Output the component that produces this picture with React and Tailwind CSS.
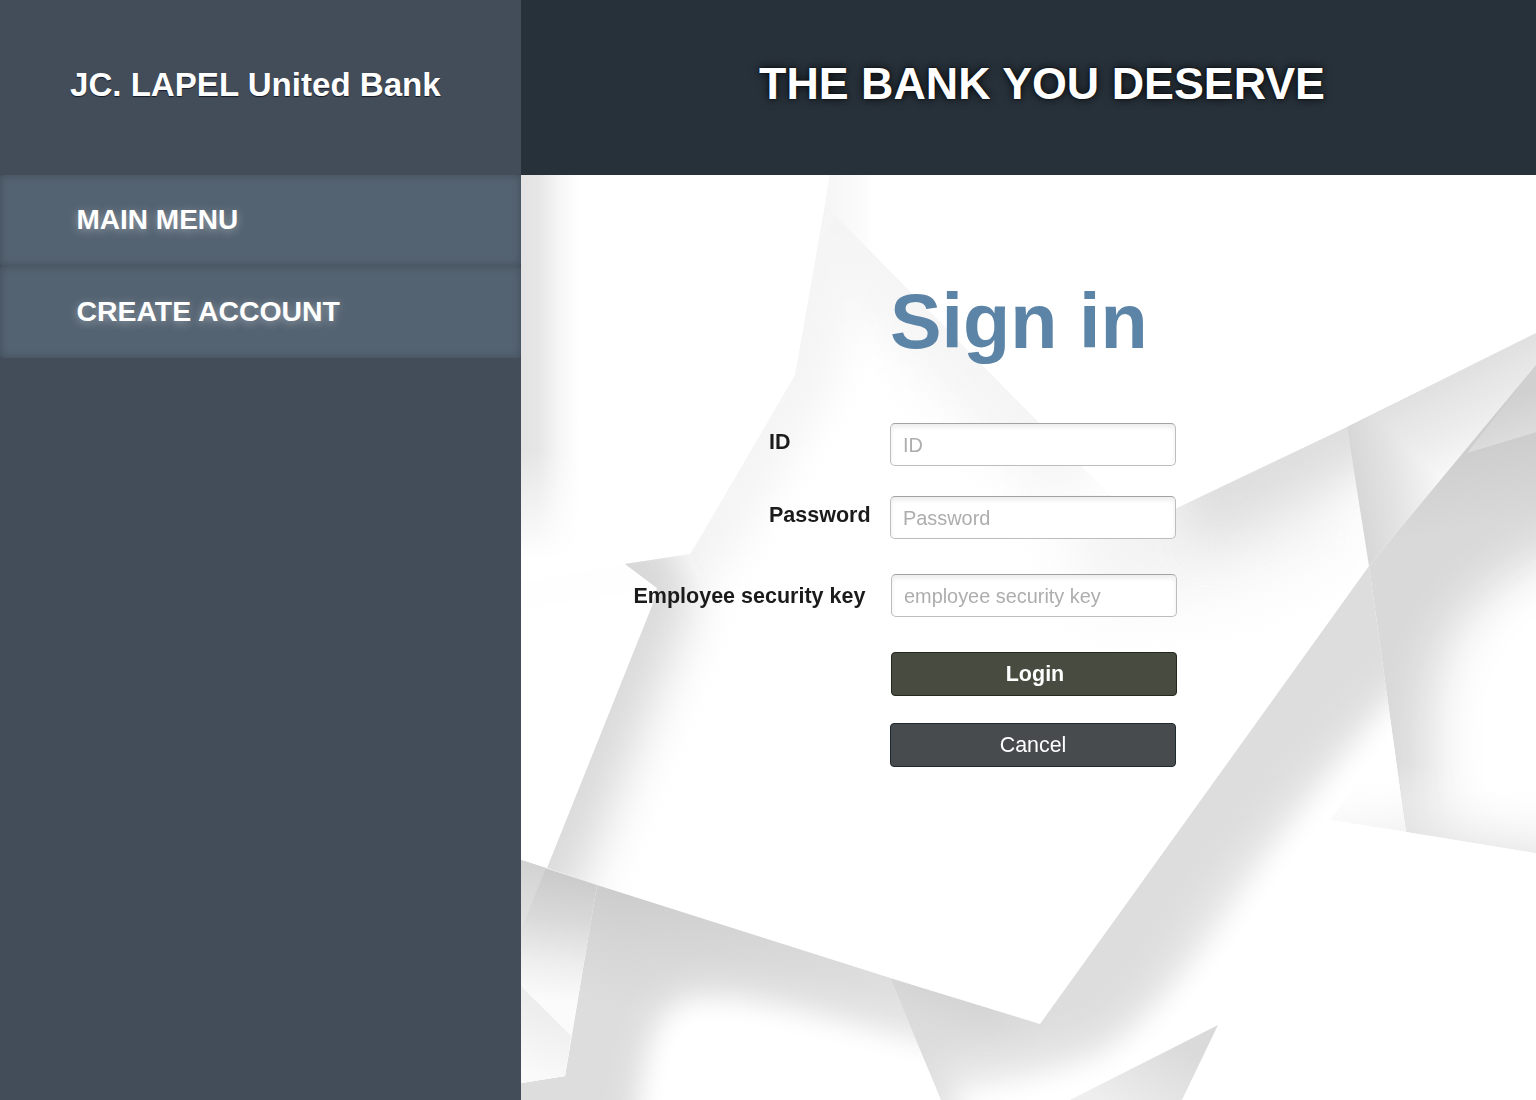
const menu = [
  { label: "MAIN MENU", box: "h-[91px] pb-[1px] text-[28px]" },
  { label: "CREATE ACCOUNT", box: "h-[92px] pb-[2px] text-[28.4px]" },
];

const inputClass =
  "block h-[43px] w-[286px] rounded-[5px] border border-[#bdbdbd] border-t-[#a3a3a3] bg-white px-3 pt-[2px] text-[19.9px] text-[#333] placeholder:text-[#adadad] placeholder:opacity-100 shadow-[inset_0_3px_5px_rgba(0,0,0,0.08)] outline-none";

function Lin({ id, p, stops }) {
  return (
    <linearGradient id={id} gradientUnits="userSpaceOnUse" x1={p[0]} y1={p[1]} x2={p[2]} y2={p[3]}>
      {stops.map(([o, c, a = 1]) => (
        <stop key={o} offset={o} stopColor={c} stopOpacity={a} />
      ))}
    </linearGradient>
  );
}

function Blur({ id, sd }) {
  return (
    <filter id={id} filterUnits="userSpaceOnUse" x="400" y="60" width="1300" height="1200" colorInterpolationFilters="sRGB">
      <feGaussianBlur stdDeviation={sd} />
    </filter>
  );
}

function PaperBackdrop() {
  return (
    <svg className="block h-full w-full [grid-area:1/1]" viewBox="521 175 1015 925" preserveAspectRatio="none" aria-hidden="true">
      <defs>
        <Lin id="strip" p={[521, 0, 580, 0]} stops={[[0, "#e3e3e3"], [0.3, "#e6e6e6"], [0.65, "#f6f6f6"], [1, "#ffffff"]]} />
        <Lin id="stripFade" p={[0, 450, 0, 560]} stops={[[0, "#fff", 0], [1, "#fff", 1]]} />
        <Lin id="ridgeTop" p={[827, 0, 874, 0]} stops={[[0, "#f6f6f6"], [0.7, "#fbfbfb"], [1, "#ffffff"]]} />
        <Lin id="peakTop" p={[1440, 380, 1490, 480]} stops={[[0, "#e0e0e0"], [0.5, "#eeeeee"], [1, "#ffffff"]]} />
        <Lin id="peakLeft" p={[1352, 480, 1450, 466]} stops={[[0, "#d6d6d6"], [0.4, "#e3e3e3"], [1, "#fcfcfc"]]} />
        <Lin id="corner" p={[1500, 400, 1515, 445]} stops={[[0, "#d0d0d0"], [1, "#dedede"]]} />
        <Lin id="right" p={[1450, 450, 1480, 610]} stops={[[0, "#cdcdcd"], [0.5, "#d9d9d9"], [1, "#d9d9d9"]]} />
        <Lin id="rightBottom" p={[1478, 845, 1488, 775]} stops={[[0, "#e6e6e6", 0.7], [0.5, "#f4f4f4", 0.4], [1, "#ffffff", 0]]} />
        <Lin id="facet" p={[1398, 832, 1390, 765]} stops={[[0, "#f4f4f4"], [1, "#ffffff", 0]]} />
        <Lin id="belt" p={[690, 910, 655, 1020]} stops={[[0, "#cccccc"], [0.5, "#d6d6d6"], [1, "#dddddd"]]} />
        <Lin id="beltLight" p={[620, 0, 910, 0]} stops={[[0, "#f2f2f2", 0], [1, "#f2f2f2", 0.5]]} />
        <Lin id="leftPane" p={[560, 875, 545, 1000]} stops={[[0, "#cbcbcb"], [0.35, "#d9d9d9"], [0.7, "#eeeeee"], [1, "#fbfbfb"]]} />
        <Lin id="leftWedge" p={[535, 862, 521, 935]} stops={[[0, "#d2d2d2"], [1, "#e4e4e4"]]} />
        <Lin id="leftLow" p={[545, 1010, 520, 1070]} stops={[[0, "#ededed"], [1, "#fafafa"]]} />
        <Lin id="tail" p={[1180, 1045, 1130, 1120]} stops={[[0, "#dadada"], [1, "#eeeeee"]]} />
        <Blur id="b12" sd="12" />
        <Blur id="b18" sd="18" />
        <Blur id="b24" sd="24" />
        <Blur id="b34" sd="34" />
        <Blur id="soft" sd="0.7" />
        <clipPath id="cRidge"><path d="M831 165 825 205 795 375 690 555 770 700 1000 520 1000 384 825 205Z" /></clipPath>
        <clipPath id="cSlope"><path d="M825 205 1110 495 1150 521 1150 620 760 620 740 470 795 375Z" /></clipPath>
        <clipPath id="cFold"><path d="M690 554 625 564 657 588 652 606 547 868 597 885 900 978 900 400 780 400Z" /></clipPath>
        <clipPath id="cWing"><path d="M1110 495 1150 521 1177 508 1347 427 1369 566 1190 800 850 800 850 495Z" /></clipPath>
        <clipPath id="cRight"><path d="M1540 360 1369 566 1406 832 1540 854Z" /></clipPath>
        <clipPath id="cBand"><path d="M1369 566 1040 1024 890 978 943 1105 1540 1105 1540 854 1406 832Z" /></clipPath>
        <clipPath id="cBelt"><path d="M597 885 890 978 943 1105 515 1105 515 1084 565 1076Z" /></clipPath>
      </defs>
      <rect x="521" y="175" width="1015" height="925" fill="#fff" />
      <g filter="url(#soft)">
        <rect x="510" y="165" width="75" height="400" fill="url(#strip)" />
        <rect x="510" y="430" width="80" height="140" fill="url(#stripFade)" />
        <path d="M515 583 625 564 652 590 515 610Z" fill="#fefefe" />
        <path d="M831 165 825 205 874 255 874 165Z" fill="url(#ridgeTop)" />
        <g clipPath="url(#cRidge)">
          <path d="M825 205 795 375 690 555" fill="none" stroke="#f5f5f5" strokeWidth="80" filter="url(#b18)" />
        </g>
        <g clipPath="url(#cSlope)">
          <path d="M780 160 1090 475" fill="none" stroke="#f5f5f5" strokeWidth="100" filter="url(#b24)" />
        </g>
        <g clipPath="url(#cWing)">
          <path d="M1080 540 1200 530 1330 480" fill="none" stroke="#f2f2f2" strokeWidth="120" filter="url(#b34)" />
          <path d="M1180 500 1430 380" fill="none" stroke="#dedede" strokeWidth="100" filter="url(#b24)" />
        </g>
        <g clipPath="url(#cFold)">
          <path d="M615 530 645 600 525 900" fill="none" stroke="#dadada" strokeWidth="92" filter="url(#b24)" />
          <path d="M605 560 640 580 665 580" fill="none" stroke="#d6d6d6" strokeWidth="32" filter="url(#b18)" />
        </g>
        <path d="M1347 427 1540 331 1540 360 1369 566Z" fill="url(#peakTop)" />
        <path className="mix-blend-darken" d="M1347 427 1540 331 1540 360 1369 566Z" fill="url(#peakLeft)" />

        <g clipPath="url(#cRight)">
          <rect x="1360" y="340" width="190" height="520" fill="url(#right)" />
          <path d="M1540 360 1467 453 1540 431Z" fill="url(#corner)" />
          <path d="M1640 520C1540 540 1464 590 1440 650C1420 710 1422 770 1440 900L1640 920Z" fill="#fff" opacity="0.85" filter="url(#b24)" />
          <path d="M1640 550C1550 570 1484 620 1468 680C1458 740 1460 790 1480 840L1640 850Z" fill="#fff" filter="url(#b18)" />
          <path d="M1406 832 1540 854 1540 750 1396 750Z" fill="url(#rightBottom)" />
        </g>

        <g clipPath="url(#cBand)">
          <rect x="880" y="560" width="660" height="545" fill="#dddddd" />
          <path d="M870 960 1010 1005" fill="none" stroke="#d2d2d2" strokeWidth="50" filter="url(#b18)" />
          <path d="M1420 650C1350 725 1300 780 1236 862C1180 936 1150 1005 1100 1034C1060 1052 1000 1054 940 1064L940 1200 1640 1200 1640 650Z" fill="#fff" opacity="0.45" filter="url(#b18)" />
          <path d="M1425 665C1365 735 1316 792 1254 878C1204 953 1160 1018 1105 1054C1066 1076 1010 1082 960 1092L960 1200 1640 1200 1640 665Z" fill="#fff" filter="url(#b12)" />
          <path d="M1330 820 1406 832 1396 750 1380 750Z" fill="url(#facet)" />
          <path d="M1330 820 1406 832 1540 854 1540 1105 1182 1105 1218 1025Z" fill="#fff" />
          <path d="M1218 1025 1062 1104 1180 1104Z" fill="url(#tail)" />
        </g>

        <g clipPath="url(#cBelt)">
          <rect x="515" y="880" width="440" height="225" fill="url(#belt)" />
          <rect x="620" y="880" width="330" height="225" fill="url(#beltLight)" />
          <path d="M622 1200C628 1070 640 990 695 984C770 980 860 1020 980 1040L980 1200Z" fill="#fff" opacity="0.4" filter="url(#b18)" />
          <path d="M638 1200C640 1080 650 1010 695 1002C760 995 860 1036 980 1058L980 1200Z" fill="#fff" filter="url(#b12)" />
        </g>

        <path d="M515 858 597 885 565 1076 515 1084Z" fill="url(#leftPane)" />
        <path d="M515 858 546 868 515 945Z" fill="url(#leftWedge)" />
        <path d="M515 980 571 1036 565 1076 515 1084Z" fill="url(#leftLow)" />
      </g>
    </svg>
  );
}

export default function App() {
  return (
    <div className="flex h-[1100px] w-[1536px] overflow-hidden bg-[#424d59] font-['Liberation_Sans',Arial,sans-serif]">
      <aside className="flex w-[521px] shrink-0 flex-col bg-[#424d59]">
        <div className="flex h-[175px] items-center pb-[6px] pl-[70px]">
          <h1 className="whitespace-nowrap text-[33.1px] font-bold leading-none text-white [text-shadow:0_1px_1px_rgba(0,0,20,0.7)]">
            JC. LAPEL United Bank
          </h1>
        </div>
        <nav className="flex flex-col">
          {menu.map((m) => (
            <a
              key={m.label}
              className={`flex items-center rounded-[3px] bg-[#546372] pl-[76.5px] font-bold leading-none text-white shadow-[inset_0_0_8px_rgba(0,0,0,0.24)] [text-shadow:0_2px_9px_rgba(255,255,255,0.4)] ${m.box}`}
            >
              {m.label}
            </a>
          ))}
        </nav>
      </aside>

      <div className="flex grow flex-col">
        <header className="flex h-[175px] items-center justify-center bg-[#27313a] pb-[9px] pl-[27px]">
          <h2 className="whitespace-nowrap text-[44.8px] font-bold leading-none text-white [text-shadow:0_0_2px_#000,0_0_10px_rgba(0,0,0,0.85)]">
            THE BANK YOU DESERVE
          </h2>
        </header>

        <main className="grid h-[925px] w-[1015px] overflow-hidden bg-white">
          <PaperBackdrop />
          <form className="relative flex flex-col pt-[102px] [grid-area:1/1]">
            <h3 className="h-[146px] pl-[369px] text-[77.3px] font-bold leading-[88px] text-[#5c84a6]">Sign in</h3>
            <div className="flex h-[73px]">
              <label className="w-[369px] pl-[248px] pt-[7px] text-[21.5px] font-bold leading-6 text-[#1b1b1b]">ID</label>
              <input className={inputClass} placeholder="ID" />
            </div>
            <div className="flex h-[78px]">
              <label className="w-[369px] pl-[248px] pt-[7px] text-[21.5px] font-bold leading-6 text-[#1b1b1b]">Password</label>
              <input className={inputClass} type="password" placeholder="Password" />
            </div>
            <div className="flex h-[78px]">
              <label className="w-[370px] whitespace-nowrap pl-[112.5px] pt-[10px] text-[21.5px] font-bold leading-6 text-[#1b1b1b]">
                Employee security key
              </label>
              <input className={inputClass} placeholder="employee security key" />
            </div>
            <button
              type="button"
              className="ml-[370px] h-[44px] w-[286px] rounded-[4px] border border-[#23271c] bg-[#484b40] pl-[2px] pt-[2px] text-[21.5px] font-bold leading-none text-white"
            >
              Login
            </button>
            <button
              type="button"
              className="ml-[369px] mt-[27px] h-[44px] w-[286px] rounded-[4px] border border-[#1f2a30] bg-[#474b4e] pt-[2px] text-[21.4px] leading-none text-white"
            >
              Cancel
            </button>
          </form>
        </main>
      </div>
    </div>
  );
}
